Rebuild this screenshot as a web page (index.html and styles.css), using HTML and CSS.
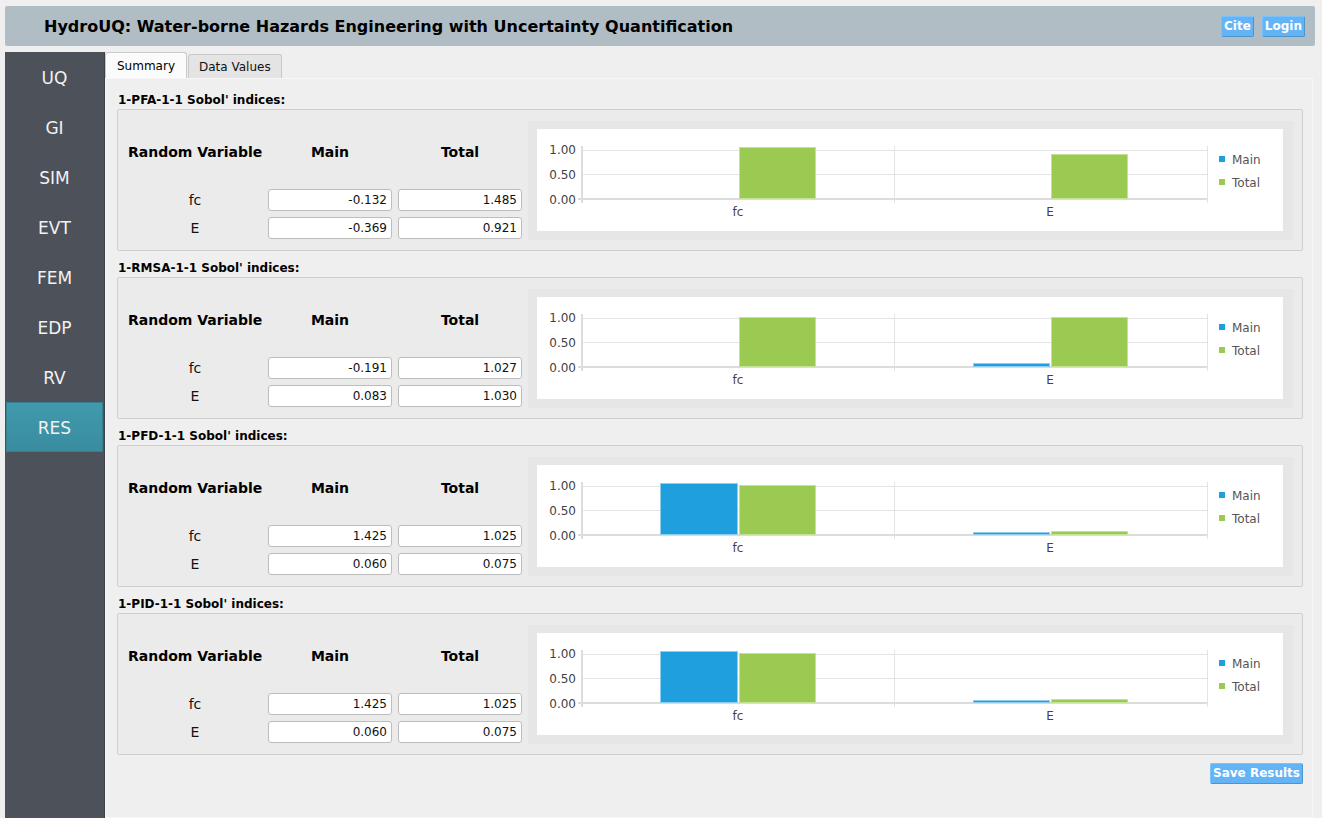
FILE: index.html
```html
<!DOCTYPE html>
<html>
<head>
<meta charset="utf-8">
<link rel="stylesheet" href="styles.css">
</head>
<body>
<div class="app">
  <header class="topbar">
    <div class="title">HydroUQ: Water-borne Hazards Engineering with Uncertainty Quantification</div>
    <div class="top-actions">
      <button class="btn">Cite</button>
      <button class="btn">Login</button>
    </div>
  </header>
  <div class="main">
    <nav class="sidebar">
      <div class="nav-item">UQ</div>
      <div class="nav-item">GI</div>
      <div class="nav-item">SIM</div>
      <div class="nav-item">EVT</div>
      <div class="nav-item">FEM</div>
      <div class="nav-item">EDP</div>
      <div class="nav-item">RV</div>
      <div class="nav-item active">RES</div>
    </nav>
    <section class="content">
      <div class="tabs">
        <div class="tab selected">Summary</div>
        <div class="tab">Data Values</div>
      </div>
      <div class="panel">

        <div class="section">
          <div class="section-label">1-PFA-1-1 Sobol' indices:</div>
          <div class="box">
            <div class="table">
              <div class="row head"><span>Random Variable</span><span>Main</span><span>Total</span></div>
              <div class="row first"><span class="rv">fc</span><input class="num" value="-0.132"><input class="num" value="1.485"></div>
              <div class="row next"><span class="rv">E</span><input class="num" value="-0.369"><input class="num" value="0.921"></div>
            </div>
            <div class="chart-outer"><div class="chart">
              <svg width="746" height="102" viewBox="0 0 746 102">
                <g class="grid">
                  <line x1="45" y1="21.5" x2="670" y2="21.5"/>
                  <line x1="45" y1="45.5" x2="670" y2="45.5"/>
                  <line x1="357.5" y1="17" x2="357.5" y2="74"/>
                  <line x1="670.5" y1="17" x2="670.5" y2="74"/>
                </g>
                <line class="axis" x1="41" y1="70" x2="670" y2="70"/>
                <line class="axis" x1="45" y1="17" x2="45" y2="74"/>
                <g class="ylab"><text x="39" y="25">1.00</text><text x="39" y="49.5">0.50</text><text x="39" y="74.5">0.00</text></g>
                <rect class="g" x="202.5" y="18.5" width="76" height="51"/>
                <rect class="g" x="514.5" y="25.5" width="76" height="44"/>
                <g class="xlab"><text x="201" y="87">fc</text><text x="513" y="87">E</text></g>
                <rect class="lb" x="682" y="27" width="6" height="6"/><text class="leg" x="695" y="34.5">Main</text>
                <rect class="lg" x="682" y="50" width="6" height="6"/><text class="leg" x="695" y="57.5">Total</text>
              </svg>
            </div></div>
          </div>
        </div>

        <div class="section">
          <div class="section-label">1-RMSA-1-1 Sobol' indices:</div>
          <div class="box">
            <div class="table">
              <div class="row head"><span>Random Variable</span><span>Main</span><span>Total</span></div>
              <div class="row first"><span class="rv">fc</span><input class="num" value="-0.191"><input class="num" value="1.027"></div>
              <div class="row next"><span class="rv">E</span><input class="num" value="0.083"><input class="num" value="1.030"></div>
            </div>
            <div class="chart-outer"><div class="chart">
              <svg width="746" height="102" viewBox="0 0 746 102">
                <g class="grid">
                  <line x1="45" y1="21.5" x2="670" y2="21.5"/>
                  <line x1="45" y1="45.5" x2="670" y2="45.5"/>
                  <line x1="357.5" y1="17" x2="357.5" y2="74"/>
                  <line x1="670.5" y1="17" x2="670.5" y2="74"/>
                </g>
                <line class="axis" x1="41" y1="70" x2="670" y2="70"/>
                <line class="axis" x1="45" y1="17" x2="45" y2="74"/>
                <g class="ylab"><text x="39" y="25">1.00</text><text x="39" y="49.5">0.50</text><text x="39" y="74.5">0.00</text></g>
                <rect class="g" x="202.5" y="20.5" width="76" height="49"/>
                <rect class="b" x="436.5" y="66.5" width="76" height="3"/>
                <rect class="g" x="514.5" y="20.5" width="76" height="49"/>
                <g class="xlab"><text x="201" y="87">fc</text><text x="513" y="87">E</text></g>
                <rect class="lb" x="682" y="27" width="6" height="6"/><text class="leg" x="695" y="34.5">Main</text>
                <rect class="lg" x="682" y="50" width="6" height="6"/><text class="leg" x="695" y="57.5">Total</text>
              </svg>
            </div></div>
          </div>
        </div>

        <div class="section">
          <div class="section-label">1-PFD-1-1 Sobol' indices:</div>
          <div class="box">
            <div class="table">
              <div class="row head"><span>Random Variable</span><span>Main</span><span>Total</span></div>
              <div class="row first"><span class="rv">fc</span><input class="num" value="1.425"><input class="num" value="1.025"></div>
              <div class="row next"><span class="rv">E</span><input class="num" value="0.060"><input class="num" value="0.075"></div>
            </div>
            <div class="chart-outer"><div class="chart">
              <svg width="746" height="102" viewBox="0 0 746 102">
                <g class="grid">
                  <line x1="45" y1="21.5" x2="670" y2="21.5"/>
                  <line x1="45" y1="45.5" x2="670" y2="45.5"/>
                  <line x1="357.5" y1="17" x2="357.5" y2="74"/>
                  <line x1="670.5" y1="17" x2="670.5" y2="74"/>
                </g>
                <line class="axis" x1="41" y1="70" x2="670" y2="70"/>
                <line class="axis" x1="45" y1="17" x2="45" y2="74"/>
                <g class="ylab"><text x="39" y="25">1.00</text><text x="39" y="49.5">0.50</text><text x="39" y="74.5">0.00</text></g>
                <rect class="b" x="123.5" y="18.5" width="77" height="51"/>
                <rect class="g" x="202.5" y="20.5" width="76" height="49"/>
                <rect class="b" x="436.5" y="67.5" width="76" height="2"/>
                <rect class="g" x="514.5" y="66.5" width="76" height="3"/>
                <g class="xlab"><text x="201" y="87">fc</text><text x="513" y="87">E</text></g>
                <rect class="lb" x="682" y="27" width="6" height="6"/><text class="leg" x="695" y="34.5">Main</text>
                <rect class="lg" x="682" y="50" width="6" height="6"/><text class="leg" x="695" y="57.5">Total</text>
              </svg>
            </div></div>
          </div>
        </div>

        <div class="section">
          <div class="section-label">1-PID-1-1 Sobol' indices:</div>
          <div class="box">
            <div class="table">
              <div class="row head"><span>Random Variable</span><span>Main</span><span>Total</span></div>
              <div class="row first"><span class="rv">fc</span><input class="num" value="1.425"><input class="num" value="1.025"></div>
              <div class="row next"><span class="rv">E</span><input class="num" value="0.060"><input class="num" value="0.075"></div>
            </div>
            <div class="chart-outer"><div class="chart">
              <svg width="746" height="102" viewBox="0 0 746 102">
                <g class="grid">
                  <line x1="45" y1="21.5" x2="670" y2="21.5"/>
                  <line x1="45" y1="45.5" x2="670" y2="45.5"/>
                  <line x1="357.5" y1="17" x2="357.5" y2="74"/>
                  <line x1="670.5" y1="17" x2="670.5" y2="74"/>
                </g>
                <line class="axis" x1="41" y1="70" x2="670" y2="70"/>
                <line class="axis" x1="45" y1="17" x2="45" y2="74"/>
                <g class="ylab"><text x="39" y="25">1.00</text><text x="39" y="49.5">0.50</text><text x="39" y="74.5">0.00</text></g>
                <rect class="b" x="123.5" y="18.5" width="77" height="51"/>
                <rect class="g" x="202.5" y="20.5" width="76" height="49"/>
                <rect class="b" x="436.5" y="67.5" width="76" height="2"/>
                <rect class="g" x="514.5" y="66.5" width="76" height="3"/>
                <g class="xlab"><text x="201" y="87">fc</text><text x="513" y="87">E</text></g>
                <rect class="lb" x="682" y="27" width="6" height="6"/><text class="leg" x="695" y="34.5">Main</text>
                <rect class="lg" x="682" y="50" width="6" height="6"/><text class="leg" x="695" y="57.5">Total</text>
              </svg>
            </div></div>
          </div>
        </div>

        <div class="actions">
          <button class="btn save">Save Results</button>
        </div>
      </div>
    </section>
  </div>
</div>
</body>
</html>
```

FILE: styles.css
```css
* { box-sizing: border-box; }
html, body { margin: 0; padding: 0; }
body {
  background: #efefef;
  font-family: "DejaVu Sans", "Liberation Sans", sans-serif;
  color: #000;
  width: 1322px;
  height: 818px;
  overflow: hidden;
}
.app {
  padding: 6px 7px 0 5px;
  display: flex;
  flex-direction: column;
  height: 818px;
}
.topbar {
  height: 40px;
  background: #b0bdc4;
  border-radius: 2px;
  display: flex;
  align-items: center;
  justify-content: space-between;
  padding: 0 10px 0 39px;
}
.title {
  font-size: 16px;
  font-weight: bold;
  color: #000;
}
.top-actions { display: flex; gap: 8px; }
.btn {
  font-family: "DejaVu Sans", "Liberation Sans", sans-serif;
  font-size: 12px;
  font-weight: bold;
  color: #fff;
  background: #62b4f6;
  border: 1px solid #4f95cc;
  border-top-color: #7cc2f8;
  border-left-color: #7cc2f8;
  border-radius: 2px;
  height: 21px;
  padding: 0 2px;
  line-height: 19px;
  white-space: nowrap;
}
.main {
  margin-top: 6px;
  display: flex;
  flex: 1;
  min-height: 0;
}
.sidebar {
  width: 100px;
  background: #4d5159;
  border-right: 1px solid #3e4148;
  display: flex;
  flex-direction: column;
}
.nav-item {
  height: 50px;
  display: flex;
  align-items: center;
  justify-content: center;
  color: #f2f2f2;
  font-size: 17px;
  padding-top: 2px;
}
.nav-item.active {
  background: linear-gradient(#419aad, #3a8c9f);
  border: 1px solid #367f90;
  margin: 0 1px;
}
.content {
  width: 1208px;
  display: flex;
  flex-direction: column;
}
.tabs {
  height: 26px;
  display: flex;
  align-items: flex-end;
}
.tab {
  font-size: 12px;
  height: 24px;
  padding: 0 10px;
  display: flex;
  align-items: center;
  background: #e4e4e4;
  border: 1px solid #c9c9c9;
  border-bottom: none;
  border-radius: 3px 3px 0 0;
  color: #111;
}
.tab.selected {
  height: 26px;
  width: 82px;
  padding: 0 0 0 11px;
  background: #fbfbfb;
  color: #000;
}
.tab + .tab { margin-left: 1px; width: 94px; padding: 0 0 0 10px; }
.panel {
  flex: 1;
  background: #efefef;
  border: 1px solid #f7f7f7;
  padding: 14px 9px 0 11px;
}
.section { margin-bottom: 10px; }
.section-label {
  font-size: 12px;
  font-weight: bold;
  line-height: 14px;
  margin-bottom: 2px;
  padding-left: 1px;
}
.box {
  height: 142px;
  background: #ebebeb;
  border: 1px solid #cfcfcf;
  border-radius: 2px;
  padding: 11px 9px 10px 10px;
  display: flex;
  gap: 6px;
}
.table {
  width: 394px;
  display: flex;
  flex-direction: column;
}
.row {
  display: grid;
  grid-template-columns: 134px 124px 124px;
  column-gap: 6px;
  align-items: center;
}
.row.head {
  margin-top: 21px;
  height: 20px;
  font-size: 14px;
  font-weight: bold;
  text-align: center;
  white-space: nowrap;
}
.row.head span:first-child { text-align: left; }
.row.first { margin-top: 27px; height: 22px; }
.row.next { margin-top: 6px; height: 22px; }
.rv {
  text-align: center;
  font-size: 14px;
  color: #111;
}
.num {
  height: 22px;
  width: 124px;
  background: #fff;
  border: 1px solid #bdbdbd;
  border-radius: 3px;
  font-family: "DejaVu Sans", "Liberation Sans", sans-serif;
  font-size: 12px;
  color: #111;
  text-align: right;
  padding: 0 4px 0 4px;
  margin: 0;
}
.chart-outer {
  flex: 1;
  background: #e6e6e6;
  padding: 8px 10px 9px 9px;
}
.chart {
  background: #fff;
  height: 102px;
}
.chart svg { display: block; }
.grid line { stroke: #e3e3e3; stroke-width: 1; }
.axis { stroke: #dcdcdc; stroke-width: 2; }
.ylab text {
  font-family: "DejaVu Sans", sans-serif;
  font-size: 12px;
  fill: #3f3f3f;
  text-anchor: end;
}
.xlab text {
  font-family: "DejaVu Sans", sans-serif;
  font-size: 12px;
  fill: #444;
  text-anchor: middle;
}
.leg {
  font-family: "DejaVu Sans", sans-serif;
  font-size: 12px;
  fill: #555;
}
.g { fill: #9bca52; stroke: #c4e296; stroke-width: 1; }
.b { fill: #1f9fdd; stroke: #8fcdef; stroke-width: 1; }
.lb { fill: #1f9fdd; }
.lg { fill: #9bca52; }
.actions {
  display: flex;
  justify-content: flex-end;
  margin-top: -2px;
}
.btn.save { width: 93px; padding: 0; text-align: center; }
```
